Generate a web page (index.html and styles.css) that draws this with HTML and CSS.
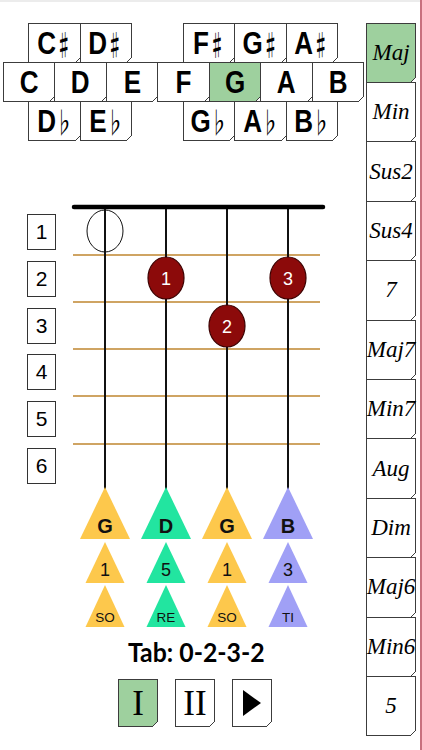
FILE: index.html
```html
<!DOCTYPE html>
<html>
<head>
<meta charset="utf-8">
<link rel="stylesheet" href="styles.css">
</head>
<body>
<div class="app">
  <main class="main">
    <div class="keys">
      <div class="krow half">
        <div class="key"><span class="lbl">C<span class="sharp">♯</span></span></div>
        <div class="key"><span class="lbl">D<span class="sharp">♯</span></span></div>
        <div class="key-gap"></div>
        <div class="key"><span class="lbl">F<span class="sharp">♯</span></span></div>
        <div class="key"><span class="lbl">G<span class="sharp">♯</span></span></div>
        <div class="key"><span class="lbl">A<span class="sharp">♯</span></span></div>
      </div>
      <div class="krow full">
        <div class="key"><span class="lbl">C</span></div>
        <div class="key"><span class="lbl">D</span></div>
        <div class="key"><span class="lbl">E</span></div>
        <div class="key"><span class="lbl">F</span></div>
        <div class="key active"><span class="lbl">G</span></div>
        <div class="key"><span class="lbl">A</span></div>
        <div class="key"><span class="lbl">B</span></div>
      </div>
      <div class="krow half">
        <div class="key"><span class="lbl">D<span class="flat">♭</span></span></div>
        <div class="key"><span class="lbl">E<span class="flat">♭</span></span></div>
        <div class="key-gap"></div>
        <div class="key"><span class="lbl">G<span class="flat">♭</span></span></div>
        <div class="key"><span class="lbl">A<span class="flat">♭</span></span></div>
        <div class="key"><span class="lbl">B<span class="flat">♭</span></span></div>
      </div>
    </div>

    <div class="board">
      <div class="fretnums">
        <div class="fnum">1</div>
        <div class="fnum">2</div>
        <div class="fnum">3</div>
        <div class="fnum">4</div>
        <div class="fnum">5</div>
        <div class="fnum">6</div>
      </div>
      <svg class="neck" width="280" height="440" viewBox="0 0 280 440">
        <g class="frets">
          <line x1="13" y1="60" x2="260" y2="60"/>
          <line x1="13" y1="107" x2="260" y2="107"/>
          <line x1="13" y1="154" x2="260" y2="154"/>
          <line x1="13" y1="201" x2="260" y2="201"/>
          <line x1="13" y1="249" x2="260" y2="249"/>
        </g>
        <g class="strings">
          <line x1="45" y1="12" x2="45" y2="294"/>
          <line x1="106" y1="12" x2="106" y2="294"/>
          <line x1="167" y1="12" x2="167" y2="294"/>
          <line x1="228" y1="12" x2="228" y2="294"/>
        </g>
        <line class="nut" x1="14" y1="12" x2="263" y2="12"/>
        <ellipse class="open" cx="45" cy="36" rx="18" ry="21"/>
        <g class="dot">
          <ellipse cx="106" cy="83" rx="18" ry="21"/>
          <text x="106" y="89.5">1</text>
        </g>
        <g class="dot">
          <ellipse cx="228" cy="83" rx="18" ry="21"/>
          <text x="228" y="89.5">3</text>
        </g>
        <g class="dot">
          <ellipse cx="167" cy="131" rx="18" ry="21"/>
          <text x="167" y="137.5">2</text>
        </g>

        <g class="tri yellow">
          <polygon points="45,292 20,344 70,344"/>
          <polygon points="45,347 25.5,388 64.5,388"/>
          <polygon points="45,390 25.5,432 64.5,432"/>
          <text class="t-note" x="45" y="337.5">G</text>
          <text class="t-deg" x="45" y="380.5">1</text>
          <text class="t-sol" x="45" y="427">SO</text>
        </g>
        <g class="tri green">
          <polygon points="106,292 81,344 131,344"/>
          <polygon points="106,347 86.5,388 125.5,388"/>
          <polygon points="106,390 86.5,432 125.5,432"/>
          <text class="t-note" x="106" y="337.5">D</text>
          <text class="t-deg" x="106" y="380.5">5</text>
          <text class="t-sol" x="106" y="427">RE</text>
        </g>
        <g class="tri yellow">
          <polygon points="167,292 142,344 192,344"/>
          <polygon points="167,347 147.5,388 186.5,388"/>
          <polygon points="167,390 147.5,432 186.5,432"/>
          <text class="t-note" x="167" y="337.5">G</text>
          <text class="t-deg" x="167" y="380.5">1</text>
          <text class="t-sol" x="167" y="427">SO</text>
        </g>
        <g class="tri purple">
          <polygon points="228,292 203,344 253,344"/>
          <polygon points="228,347 208.5,388 247.5,388"/>
          <polygon points="228,390 208.5,432 247.5,432"/>
          <text class="t-note" x="228" y="337.5">B</text>
          <text class="t-deg" x="228" y="380.5">3</text>
          <text class="t-sol" x="228" y="427">TI</text>
        </g>
      </svg>
    </div>

    <div class="tab"><span class="tabtxt">Tab: 0-2-3-2</span></div>

    <div class="controls">
      <div class="btn active"><span class="roman">I</span></div>
      <div class="btn"><span class="roman">II</span></div>
      <div class="btn">
        <svg width="20" height="26" viewBox="0 0 20 26"><polygon points="1,0 19,13 1,26" fill="#000"/></svg>
      </div>
    </div>
  </main>

  <aside class="chords">
    <div class="chord active">Maj</div>
    <div class="chord">Min</div>
    <div class="chord">Sus2</div>
    <div class="chord">Sus4</div>
    <div class="chord">7</div>
    <div class="chord">Maj7</div>
    <div class="chord">Min7</div>
    <div class="chord">Aug</div>
    <div class="chord">Dim</div>
    <div class="chord">Maj6</div>
    <div class="chord">Min6</div>
    <div class="chord">5</div>
  </aside>
  <div class="rule"></div>
</div>
</body>
</html>
```

FILE: styles.css
```css
html, body {
  margin: 0;
  padding: 0;
  background: #fff;
}

body {
  width: 422px;
  height: 750px;
  overflow: hidden;
  font-family: "Liberation Sans", Arial, sans-serif;
  color: #000;
}

.app {
  display: flex;
  height: 750px;
  box-sizing: border-box;
  border-top: 2px solid #ececec;
}

.main {
  width: 366px;
  flex: none;
  padding-top: 20.7px;
}

/* ---------- keys ---------- */
.krow {
  display: flex;
  height: 40px;
}
.krow + .krow {
  margin-top: -1px;
}
.krow.half {
  margin-left: 28px;
}
.krow.full {
  margin-left: 2.7px;
}
.key-gap {
  flex: none;
  width: 51.5px;
}

.key,
.chord,
.btn {
  position: relative;
  box-sizing: border-box;
  border: 1px solid #3c3c3c;
  background: #fff;
  display: flex;
  align-items: center;
  justify-content: center;
}
.key::after,
.chord::after,
.btn::after {
  content: "";
  position: absolute;
  right: -1px;
  bottom: -1px;
  width: 6px;
  height: 6px;
  background: linear-gradient(to bottom right, transparent 44%, #3c3c3c 44%, #3c3c3c 58%, #fff 58%);
}

.key {
  flex: none;
  width: 52.5px;
  height: 40px;
  margin-right: -1px;
}
.key.active,
.chord.active,
.btn.active {
  background: #9ed09e;
}

.lbl {
  display: inline-flex;
  align-items: center;
  font-family: "Liberation Sans", Arial, sans-serif;
  font-weight: bold;
  font-size: 31px;
  line-height: 1;
  transform: scaleX(0.84);
  white-space: nowrap;
  margin-top: 1px;
}
.sharp,
.flat {
  display: inline-block;
  font-family: "Noto Sans CJK JP", "DejaVu Sans", sans-serif;
  font-size: 29px;
  line-height: 1;
  transform: scaleX(0.6);
  margin-left: -5px;
  margin-right: -5px;
}
.sharp {
  font-weight: bold;
}
.flat {
  font-weight: normal;
  transform: scaleX(0.75);
  margin-left: -5px;
  margin-right: -5px;
}

/* ---------- fretboard ---------- */
.board {
  display: flex;
  align-items: flex-start;
  margin-top: 54.3px;
}
.fretnums {
  margin-left: 27px;
  padding-top: 19px;
  display: flex;
  flex-direction: column;
  gap: 10.8px;
}
.fnum {
  box-sizing: border-box;
  width: 29px;
  height: 36px;
  border: 1px solid #333;
  display: flex;
  align-items: center;
  justify-content: center;
  font-size: 21px;
}
.neck {
  display: block;
  margin-left: 4px;
  flex: none;
}
.frets line {
  stroke: #cfa463;
  stroke-width: 2;
}
.strings line {
  stroke: #111;
  stroke-width: 2;
}
.nut {
  stroke: #000;
  stroke-width: 4.5;
  stroke-linecap: round;
}
.open {
  fill: none;
  stroke: #111;
  stroke-width: 1;
}
.dot ellipse {
  fill: #8c0a0a;
  stroke: #3c0000;
  stroke-width: 1.2;
}
.dot text {
  fill: #fff;
  font-family: "Liberation Sans", Arial, sans-serif;
  font-size: 18px;
  text-anchor: middle;
}
.tri text {
  font-family: "Liberation Sans", Arial, sans-serif;
  text-anchor: middle;
  fill: #111;
}
.tri.yellow polygon { fill: #fdc84c; }
.tri.green polygon { fill: #22e5a0; }
.tri.purple polygon { fill: #a0a0f6; }
.t-note {
  font-size: 20px;
  font-weight: bold;
}
.t-deg {
  font-size: 18px;
}
.t-sol {
  font-size: 13.5px;
}

/* ---------- tab + controls ---------- */
.tab {
  margin-top: 2.5px;
  padding-left: 26px;
  text-align: center;
  font-family: Lato, "Open Sans", sans-serif;
  font-weight: bold;
  font-size: 27px;
  line-height: 30px;
}
.tabtxt {
  display: inline-block;
  transform: scaleX(0.92);
}
.controls {
  margin-top: 11.5px;
  padding-left: 24px;
  display: flex;
  justify-content: center;
  gap: 17px;
}
.btn {
  width: 40px;
  height: 48px;
}
.roman {
  font-family: "Liberation Serif", "Times New Roman", serif;
  font-size: 35px;
  line-height: 1;
  margin-top: 2px;
}

/* ---------- chord column ---------- */
.chords {
  width: 50px;
  flex: none;
  padding-top: 20.7px;
}
.chord {
  height: 60.4px;
  font-family: "Liberation Serif", "Times New Roman", serif;
  font-style: italic;
  font-size: 23px;
}
.chord + .chord {
  margin-top: -1px;
}

.rule {
  width: 2px;
  margin-left: 3.5px;
  margin-top: -2px;
  height: 750px;
  background: #c8707e;
  flex: none;
}
```
